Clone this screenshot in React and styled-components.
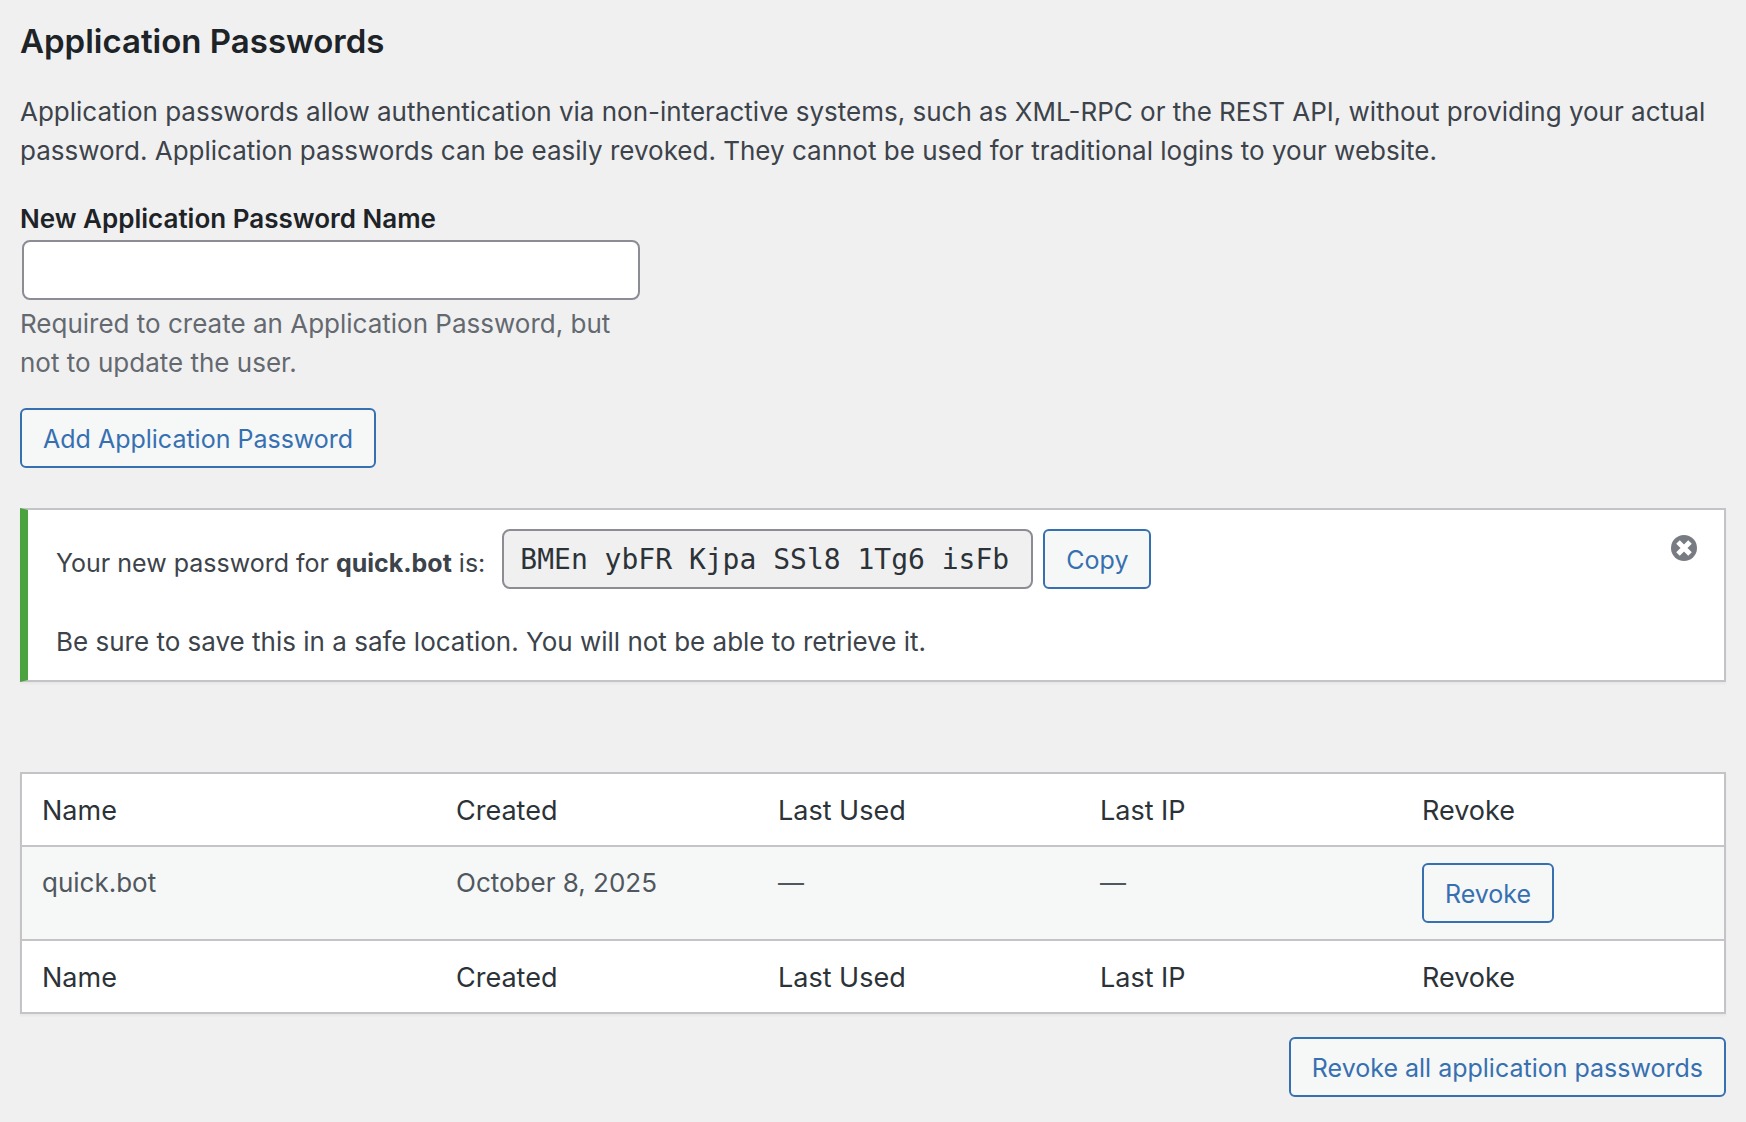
import React from "react";
import styled, { createGlobalStyle } from "styled-components";

const GlobalStyle = createGlobalStyle`
  *, *::before, *::after { box-sizing: border-box; }
  body {
    margin: 0;
    background: #f0f0f0;
    color: #3c434a;
    font-family: Inter, "Liberation Sans", sans-serif;
    font-size: 26px;
    line-height: 39px;
  }
`;

const Page = styled.main`
  padding: 17px 20px 24px;
`;

const Title = styled.h2`
  margin: 0 0 27px;
  color: #1d2327;
  font-size: 33px;
  font-weight: 600;
  line-height: 48px;
`;

const Text = styled.p`
  margin: 0;
`;

const CreateForm = styled.form`
  display: flex;
  flex-direction: column;
  align-items: flex-start;
  max-width: 622px;
  margin: 29px 0 40px;
`;

const FieldLabel = styled.label`
  color: #1d2327;
  font-weight: 600;
`;

const Field = styled.input`
  height: 60px;
  padding: 0 16px;
  border: 2px solid #8c8d94;
  border-radius: 8px;
  background: #fff;
  color: #2c3338;
  font: inherit;
`;

const NameField = styled(Field)`
  align-self: stretch;
  margin: 2px 2px 4px;
`;

const Hint = styled.p`
  margin: 0 0 26px;
  color: #646970;
`;

const Button = styled.button`
  height: 60px;
  padding: 2px 21px 0;
  border: 2px solid #3670b0;
  border-radius: 6px;
  background: #f6f7f7;
  color: #3670b0;
  font: inherit;
  font-size: 25px;
  white-space: nowrap;
  cursor: pointer;
`;

const Notice = styled.section`
  display: flex;
  align-items: flex-start;
  justify-content: space-between;
  margin-bottom: 90px;
  padding: 19px 27px 19px 28px;
  border: 2px solid #c3c3c8;
  border-left: 8px solid #4aa33f;
  background: #fff;
  box-shadow: 0 2px 2px rgba(0, 0, 0, 0.04);
`;

const NoticeBody = styled.div`
  display: grid;
  gap: 33px;
`;

const PasswordRow = styled.div`
  display: flex;
  align-items: flex-start;
  gap: 10px;
`;

const PasswordLabel = styled.label`
  padding: 15px 7px 0 0;
  font-size: 25px;
  white-space: nowrap;
`;

const PasswordField = styled(Field)`
  width: 531px;
  background: #f0f0f0;
  font-family: "DejaVu Sans Mono", "Liberation Mono", monospace;
  font-size: 28px;
`;

const Dismiss = styled.button`
  width: 26px;
  height: 26px;
  margin: 6px 0 0;
  padding: 0;
  border: 0;
  background: none;
  cursor: pointer;

  svg { display: block; }
`;

const Table = styled.table`
  width: 100%;
  margin-bottom: 23px;
  border: 2px solid #c3c3c8;
  border-spacing: 0;
  table-layout: fixed;
  background: #fff;
  box-shadow: 0 2px 2px rgba(0, 0, 0, 0.04);

  th, td {
    padding: 16px 20px;
    text-align: left;
    vertical-align: top;
  }

  th {
    padding: 17px 20px 15px;
    color: #2c3338;
    font-size: 27px;
    font-weight: 400;
  }

  thead th { border-bottom: 2px solid #c3c3c8; }
  tfoot th { border-top: 2px solid #c3c3c8; }

  td {
    background: #f6f7f7;
    color: #50575e;
  }

  td > button { display: block; }
`;

const NameColumn = styled.col`
  width: 414px;
`;

const Actions = styled.div`
  display: flex;
  justify-content: flex-end;
`;

const columns = ["Name", "Created", "Last Used", "Last IP", "Revoke"];

const passwords = [
  { name: "quick.bot", created: "October 8, 2025", lastUsed: "—", lastIp: "—" },
];

function HeadingRow() {
  return (
    <tr>
      {columns.map((column) => (
        <th key={column} scope="col">{column}</th>
      ))}
    </tr>
  );
}

export default function App() {
  return (
    <>
      <GlobalStyle />
      <Page>
        <Title>Application Passwords</Title>
        <Text>
          Application passwords allow authentication via non-interactive systems, such as XML-RPC or the REST API, without providing your actual password. Application passwords can be easily revoked. They cannot be used for traditional logins to your website.
        </Text>

        <CreateForm onSubmit={(event) => event.preventDefault()}>
          <FieldLabel htmlFor="password-name">New Application Password Name</FieldLabel>
          <NameField id="password-name" type="text" aria-describedby="password-hint" />
          <Hint id="password-hint">
            Required to create an Application Password, but not to update the user.
          </Hint>
          <Button type="submit">Add Application Password</Button>
        </CreateForm>

        <Notice>
          <NoticeBody>
            <PasswordRow>
              <PasswordLabel htmlFor="new-password">
                Your new password for <strong>quick.bot</strong> is:
              </PasswordLabel>
              <PasswordField
                id="new-password"
                type="text"
                readOnly
                value="BMEn ybFR Kjpa SSl8 1Tg6 isFb"
              />
              <Button type="button">Copy</Button>
            </PasswordRow>
            <Text>Be sure to save this in a safe location. You will not be able to retrieve it.</Text>
          </NoticeBody>
          <Dismiss type="button" aria-label="Dismiss this notice">
            <svg width="26" height="26" viewBox="0 0 26 26" aria-hidden="true">
              <circle cx="13" cy="13" r="13" fill="#787c82" />
              <path d="M7 7 19 19M19 7 7 19" stroke="#fff" strokeWidth="5" />
            </svg>
          </Dismiss>
        </Notice>

        <Table>
          <colgroup>
            <NameColumn />
            <col span={4} />
          </colgroup>
          <thead><HeadingRow /></thead>
          <tbody>
            {passwords.map((item) => (
              <tr key={item.name}>
                <td>{item.name}</td>
                <td>{item.created}</td>
                <td>{item.lastUsed}</td>
                <td>{item.lastIp}</td>
                <td><Button type="button">Revoke</Button></td>
              </tr>
            ))}
          </tbody>
          <tfoot><HeadingRow /></tfoot>
        </Table>

        <Actions>
          <Button type="button">Revoke all application passwords</Button>
        </Actions>
      </Page>
    </>
  );
}
